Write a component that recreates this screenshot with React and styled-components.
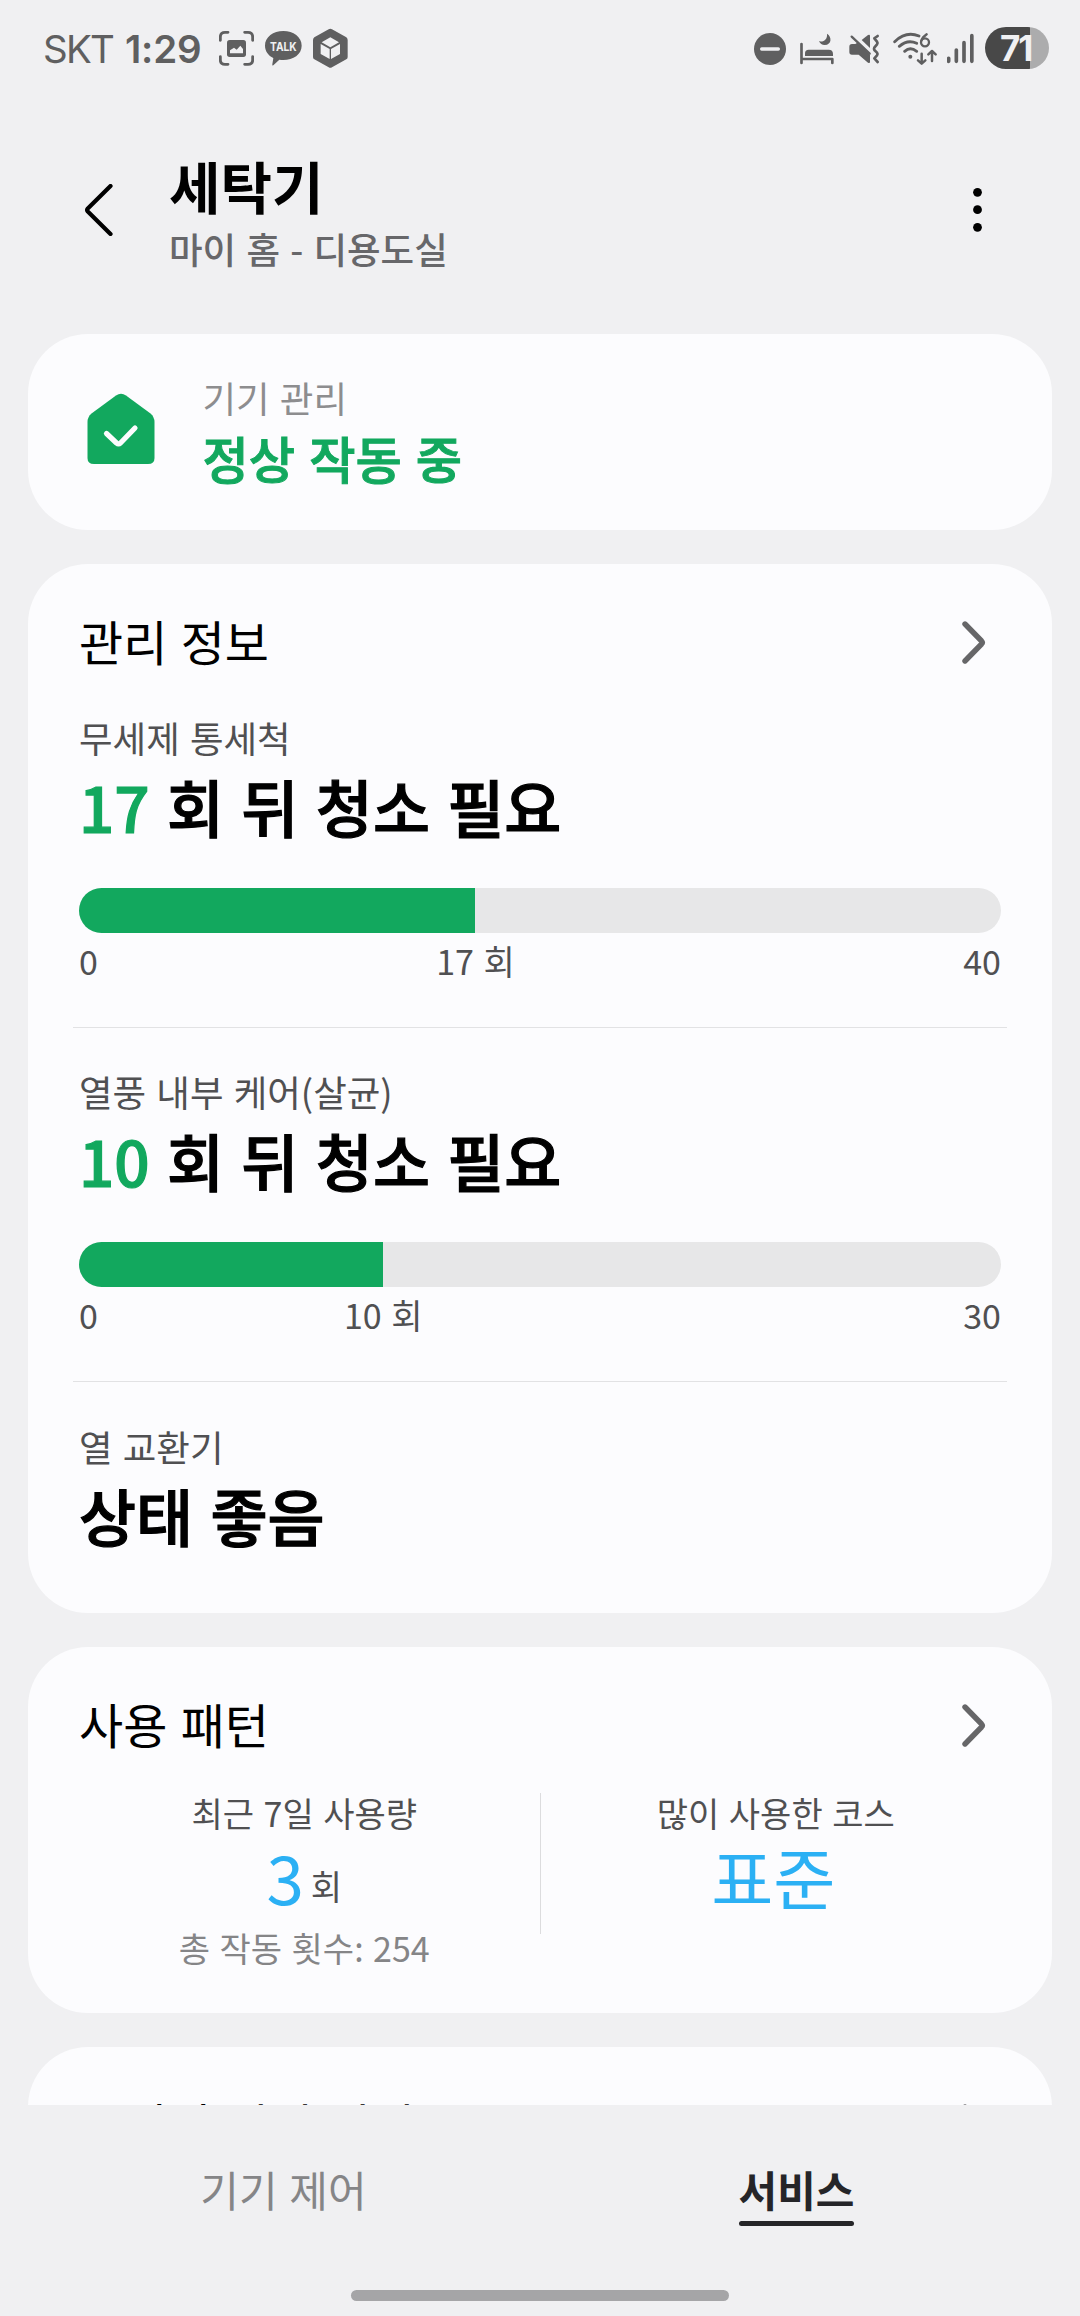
import React from "react";
import styled, { createGlobalStyle } from "styled-components";

const GREEN = "#12a85e";
const BLUE = "#2bb0f4";
const ICON = "#5f5f60";

const GlobalStyle = createGlobalStyle`
  * { box-sizing: border-box; word-spacing: 0.055em; }
  body {
    margin: 0;
    background: #f0f0f2;
    font-family: "Noto Sans CJK KR", "Noto Sans", sans-serif;
    color: #000;
  }
`;

const Screen = styled.div`
  width: 1080px;
  height: 2316px;
  display: flex;
  flex-direction: column;
  overflow: hidden;
  background: #f0f0f2;
`;

const StatusBar = styled.div`
  flex: none;
  height: 98px;
  padding: 0 31px 0 43px;
  display: flex;
  align-items: center;
  justify-content: space-between;
`;

const StatusGroup = styled.div`
  display: flex;
  align-items: center;
`;

const StatusIcon = styled.svg`
  display: block;
  height: 48px;
  margin-left: ${(p) => p.$gap}px;
`;

const Carrier = styled.span`
  width: 82px;
  font: 400 38.5px/46px Inter, sans-serif;
  letter-spacing: -1.8px;
  color: ${ICON};
`;

const Clock = styled.span`
  width: 83px;
  font: 600 38.5px/46px Inter, sans-serif;
  letter-spacing: -0.2px;
  color: ${ICON};
`;

const Battery = styled.div`
  width: 64px;
  height: 42px;
  margin: -2px 0 0 11px;
  border-radius: 21px;
  display: flex;
  align-items: center;
  padding-left: 15px;
  background: linear-gradient(90deg, #484848 45px, #acacad 45px);
  font: 700 35px/42px Inter, sans-serif;
  letter-spacing: -2px;
  color: #f0f0f2;
`;

const Header = styled.header`
  flex: none;
  height: 236px;
  padding: 53px 85px 0;
  display: flex;
`;

const HeaderButton = styled.button`
  flex: none;
  border: 0;
  padding: 0;
  width: ${(p) => p.$width}px;
  height: 118px;
  background: none;
  display: flex;
  align-items: center;
`;

const HeaderTitles = styled.div`
  flex: 1;
  padding-left: 56px;
`;

const Title = styled.h1`
  margin: 0;
  font-size: 56px;
  line-height: 68px;
  font-weight: 700;
`;

const Subtitle = styled.div`
  margin-top: 8px;
  font-size: 36.5px;
  line-height: 44px;
  font-weight: 500;
  color: #67676a;
`;

const Content = styled.main`
  flex: none;
  height: 1771px;
  padding: 0 28px;
  display: flex;
  flex-direction: column;
  gap: 34px;
  overflow: hidden;
`;

const Card = styled.section`
  flex: none;
  height: ${(p) => p.$height}px;
  border-radius: 60px;
  padding: ${(p) => p.$padding || "0 51px"};
  background: #fcfcfe;
`;

const StatusCard = styled(Card)`
  display: flex;
`;

const HomeCheckWrap = styled.div`
  width: 68px;
  padding-top: 17px;
`;

const StatusTexts = styled.div`
  margin-left: 47.5px;
`;

const Caption = styled.div`
  font-size: 36.5px;
  line-height: 44px;
  color: ${(p) => p.$color || "#505052"};
`;

const StatusValue = styled.div`
  margin-top: 7px;
  font-size: 50.3px;
  line-height: 60px;
  font-weight: 500;
  -webkit-text-stroke: 0.02em;
  color: ${GREEN};
`;

const CardHead = styled.div`
  height: 108px;
  display: flex;
  align-items: center;
  justify-content: space-between;
  padding: 48px 15px 0 0;
`;

const CardTitle = styled.h2`
  margin: 0 0 5px;
  font-size: 48px;
  line-height: 60px;
  font-weight: 400;
`;

const ArrowBox = styled.svg`
  display: block;
  flex: none;
`;

const CareItem = styled.div`
  height: ${(p) => p.$height}px;
  padding-top: ${(p) => p.$top}px;
`;

const CareValue = styled.div`
  margin-top: 9px;
  font-size: 62px;
  line-height: 74px;
  font-weight: 500;
  -webkit-text-stroke: 0.02em;

  em {
    font-style: normal;
    color: ${GREEN};
  }
`;

const Track = styled.div`
  height: 45px;
  margin-top: 45px;
  border-radius: 22.5px;
  overflow: hidden;
  background: #e7e7e8;
`;

const Fill = styled.div`
  height: 100%;
  background: ${GREEN};
`;

const Scale = styled.div`
  display: flex;
  justify-content: space-between;
  margin-top: 7px;
  font-size: 34px;
  line-height: 42px;
  color: #505052;
`;

const ScaleMark = styled.div`
  width: 0;
  display: flex;
  justify-content: center;
  white-space: nowrap;
`;

const ScaleSpan = styled.div`
  flex: none;
`;

const Divider = styled.div`
  height: 1px;
  margin: 0 -6px;
  background: #e2e2e4;
`;

const Stats = styled.div`
  display: flex;
  margin: 36px -10px 0;
`;

const Stat = styled.div`
  flex: 1;
  display: flex;
  flex-direction: column;
  align-items: center;
`;

const StatDivider = styled.div`
  width: 1px;
  height: 141px;
  margin-top: 2px;
  background: #dcdcde;
`;

const StatLabel = styled.div`
  font-size: 34px;
  line-height: 44px;
  color: ${(p) => p.$color || "#505052"};
`;

const StatValue = styled.div`
  display: flex;
  align-items: center;
  gap: 7px;
  height: 80px;
  margin: 1px 0 10px;
  padding-right: ${(p) => p.$trail || 0}px;
  font-size: 67.5px;
  line-height: 80px;
  color: ${BLUE};

  small {
    font-size: 34px;
    line-height: 44px;
    margin-top: 20px;
    color: #505052;
  }
`;

const TabBar = styled.nav`
  flex: none;
  height: 185px;
  display: flex;
  padding: 56px 27px 0;
`;

const Tab = styled.div`
  flex: 1;
  display: flex;
  justify-content: center;
`;

const TabLabel = styled.span`
  height: 65px;
  font-size: 42px;
  line-height: 56px;
  font-weight: ${(p) => (p.$active ? 700 : 400)};
  color: ${(p) => (p.$active ? "#252528" : "#858587")};

  &::after {
    content: "";
    display: ${(p) => (p.$active ? "block" : "none")};
    height: 5px;
    margin-top: 4px;
    border-radius: 3px;
    background: #252528;
  }
`;

const HomeIndicator = styled.div`
  flex: none;
  width: 378px;
  height: 11px;
  margin: 0 auto;
  border-radius: 6px;
  background: #a5a5a7;
`;

function Arrow() {
  return (
    <ArrowBox width="24" height="43" viewBox="0 0 24 43" fill="none">
      <path
        d="M3 3L19.6 20Q21 21.5 19.6 23L3 40"
        stroke="#666668"
        strokeWidth="5.4"
        strokeLinecap="round"
        strokeLinejoin="round"
      />
    </ArrowBox>
  );
}

function CaptureIcon() {
  return (
    <StatusIcon $gap={11} width="35" viewBox="657 75 105 144" fill="none">
      <path
        d="M661 121V111Q661 97 675 97H684M734 97H744Q758 97 758 111V121M758 170V180Q758 193 744 193H734M684 193H675Q661 193 661 180V170"
        stroke={ICON}
        strokeWidth="8.5"
        strokeLinecap="round"
      />
      <rect x="681" y="120" width="57" height="51" rx="8" fill={ICON} />
      <path d="M690 160V151L702 143L710 149L721 137L729 147V160Z" fill="#f0f0f2" />
    </StatusIcon>
  );
}

function TalkIcon() {
  return (
    <StatusIcon $gap={11} width="37" viewBox="795 75 111 144">
      <path
        d="M850 93C880 93 905 111 905 137C905 163 880 180 850 180Q844 180 838 179L820 196Q816 198 817 193L820 174C805 167 795 153 795 137C795 111 820 93 850 93Z"
        fill={ICON}
      />
      <text
        x="850"
        y="152"
        textAnchor="middle"
        textLength="80"
        lengthAdjust="spacingAndGlyphs"
        fontFamily="Inter, sans-serif"
        fontWeight="700"
        fontSize="36"
        fill="#f0f0f2"
      >
        TALK
      </text>
    </StatusIcon>
  );
}

function CubeIcon() {
  return (
    <StatusIcon $gap={11} width="35" viewBox="939 75 105 144">
      <path
        d="M986 88Q991 85 996 88L1039 112Q1043 115 1043 120V171Q1043 176 1039 178L996 202Q991 205 986 202L943 178Q939 176 939 171V120Q939 115 943 112Z"
        fill={ICON}
      />
      <path
        d="M991 112L1017 127L991 142L965 127ZM962 132L989 147V177L962 162ZM1020 132L993 147V177L1020 162Z"
        fill="#f0f0f2"
      />
    </StatusIcon>
  );
}

function DndIcon() {
  return (
    <StatusIcon $gap={0} width="32" viewBox="103 75 96 144">
      <circle cx="151" cy="147" r="48" fill={ICON} />
      <path d="M126 147H176" stroke="#f0f0f2" strokeWidth="10" strokeLinecap="round" />
    </StatusIcon>
  );
}

function BedIcon() {
  return (
    <StatusIcon $gap={14} width="34" viewBox="240 75 102 144" fill="none">
      <path
        d="M244.500 132V189M244.500 177H337V189"
        stroke={ICON}
        strokeWidth="8"
        strokeLinecap="round"
        strokeLinejoin="round"
      />
      <path d="M255 168V160Q255 149 266 149H326Q339 149 339 162V168Z" fill={ICON} />
      <path d="M321 101C336 110 336 134 314 135Q302 135 297 124C313 127 323 116 321 101Z" fill={ICON} />
    </StatusIcon>
  );
}

function MuteIcon() {
  return (
    <StatusIcon $gap={15} width="31" viewBox="386 75 93 144" fill="none">
      <path d="M395 132H405L411 128L449 164V187Q448 191 443 188L415 164H395Q387 164 387 156V140Q387 132 395 132Z" fill={ICON} />
      <path d="M424 120L443 105Q449 102 449 108V144Z" fill={ICON} />
      <path d="M394 110L448 161" stroke={ICON} strokeWidth="7" strokeLinecap="round" />
      <path
        d="M472 108L462 115L470 125Q473 129 470 133L462 143Q460 147 462 150L470 158Q473 162 470 166L462 175L472 186"
        stroke={ICON}
        strokeWidth="8"
        strokeLinecap="round"
        strokeLinejoin="round"
      />
    </StatusIcon>
  );
}

function WifiIcon() {
  return (
    <StatusIcon $gap={13} width="45" viewBox="519 75 135 144" fill="none">
      <path
        d="M524 125Q558 92 597 108M538 139Q563 117 590 130M554 154Q571 139 590 154"
        stroke={ICON}
        strokeWidth="8.500"
        strokeLinecap="round"
      />
      <circle cx="571" cy="170" r="6" fill={ICON} />
      <circle cx="615" cy="127" r="12" stroke={ICON} strokeWidth="7" />
      <path d="M604 122Q607 112 620 103" stroke={ICON} strokeWidth="7" strokeLinecap="round" />
      <path
        d="M605 161V190M594 181L605 191L616 181M636 183V153M625 163L636 153L647 163"
        stroke={ICON}
        strokeWidth="7.500"
        strokeLinecap="round"
        strokeLinejoin="round"
      />
    </StatusIcon>
  );
}

function SignalIcon() {
  return (
    <StatusIcon $gap={9} width="27" viewBox="681 75 81 144" fill="none">
      <path
        d="M686 175V184M709 150V184M732 128V184M755.500 107V184"
        stroke={ICON}
        strokeWidth="11"
        strokeLinecap="round"
      />
    </StatusIcon>
  );
}

function HomeCheckIcon() {
  return (
    <svg width="68" height="74" viewBox="0 0 68 74" fill="none">
      <path
        d="M29 2.500Q34 -1 39 2.500L63.500 20.500Q67.500 24 67.500 29V65Q67.500 71 61 71H7Q0.500 71 0.500 65V29Q0.500 24 4.500 20.500Z"
        fill={GREEN}
      />
      <path
        d="M19.500 40.500L29.500 50Q31.500 51.700 33.500 50L48 35"
        stroke="#fcfcfe"
        strokeWidth="5.200"
        strokeLinecap="round"
        strokeLinejoin="round"
      />
    </svg>
  );
}

function CareGauge({ label, value, max, percent, top, height }) {
  return (
    <CareItem $top={top} $height={height}>
      <Caption>{label}</Caption>
      <CareValue>
        <em>{value}</em> 회 뒤 청소 필요
      </CareValue>
      <Track>
        <Fill style={{ width: `${percent}%` }} />
      </Track>
      <Scale>
        <ScaleSpan style={{ width: `${percent}%` }}>0</ScaleSpan>
        <ScaleMark>{value} 회</ScaleMark>
        <ScaleSpan style={{ width: `${100 - percent}%`, textAlign: "right" }}>{max}</ScaleSpan>
      </Scale>
    </CareItem>
  );
}

export default function App() {
  return (
    <>
      <GlobalStyle />
      <Screen>
        <StatusBar>
          <StatusGroup>
            <Carrier>SKT</Carrier>
            <Clock>1:29</Clock>
            <CaptureIcon />
            <TalkIcon />
            <CubeIcon />
          </StatusGroup>
          <StatusGroup>
            <DndIcon />
            <BedIcon />
            <MuteIcon />
            <WifiIcon />
            <SignalIcon />
            <Battery>71</Battery>
          </StatusGroup>
        </StatusBar>

        <Header>
          <HeaderButton $width={28} aria-label="뒤로">
            <svg width="28" height="52" viewBox="0 0 28 52" fill="none">
              <path
                d="M25.500 2L2.800 24.500Q1.500 26 2.800 27.500L25.500 50"
                stroke="#000"
                strokeWidth="4.200"
                strokeLinecap="round"
                strokeLinejoin="round"
              />
            </svg>
          </HeaderButton>
          <HeaderTitles>
            <Title>세탁기</Title>
            <Subtitle>마이 홈 - 디용도실</Subtitle>
          </HeaderTitles>
          <HeaderButton $width={22} aria-label="더보기">
            <svg width="10" height="46" viewBox="0 0 10 46">
              <circle cx="4.500" cy="5.300" r="4.400" />
              <circle cx="4.500" cy="22.700" r="4.400" />
              <circle cx="4.500" cy="40.300" r="4.400" />
            </svg>
          </HeaderButton>
        </Header>

        <Content>
          <StatusCard $height={196} $padding="42px 58px 0 59px">
            <HomeCheckWrap>
              <HomeCheckIcon />
            </HomeCheckWrap>
            <StatusTexts>
              <Caption $color="#8d8d8f">기기 관리</Caption>
              <StatusValue>정상 작동 중</StatusValue>
            </StatusTexts>
          </StatusCard>

          <Card $height={1049}>
            <CardHead>
              <CardTitle>관리 정보</CardTitle>
              <Arrow />
            </CardHead>
            <CareGauge label="무세제 통세척" value={17} max={40} percent={43} top={44} height={355} />
            <Divider />
            <CareGauge label="열풍 내부 케어(살균)" value={10} max={30} percent={33} top={42} height={353} />
            <Divider />
            <CareItem $top={43} $height={200}>
              <Caption>열 교환기</Caption>
              <CareValue>상태 좋음</CareValue>
            </CareItem>
          </Card>

          <Card $height={366}>
            <CardHead>
              <CardTitle>사용 패턴</CardTitle>
              <Arrow />
            </CardHead>
            <Stats>
              <Stat>
                <StatLabel>최근 7일 사용량</StatLabel>
                <StatValue>
                  3<small>회</small>
                </StatValue>
                <StatLabel $color="#858587">총 작동 횟수: 254</StatLabel>
              </Stat>
              <StatDivider />
              <Stat>
                <StatLabel>많이 사용한 코스</StatLabel>
                <StatValue $trail={5}>표준</StatValue>
              </Stat>
            </Stats>
          </Card>

          <Card $height={366}>
            <CardHead>
              <CardTitle>우리집 기기 전기</CardTitle>
              <Arrow />
            </CardHead>
          </Card>
        </Content>

        <TabBar>
          <Tab>
            <TabLabel>기기 제어</TabLabel>
          </Tab>
          <Tab>
            <TabLabel $active>서비스</TabLabel>
          </Tab>
        </TabBar>
        <HomeIndicator />
      </Screen>
    </>
  );
}
